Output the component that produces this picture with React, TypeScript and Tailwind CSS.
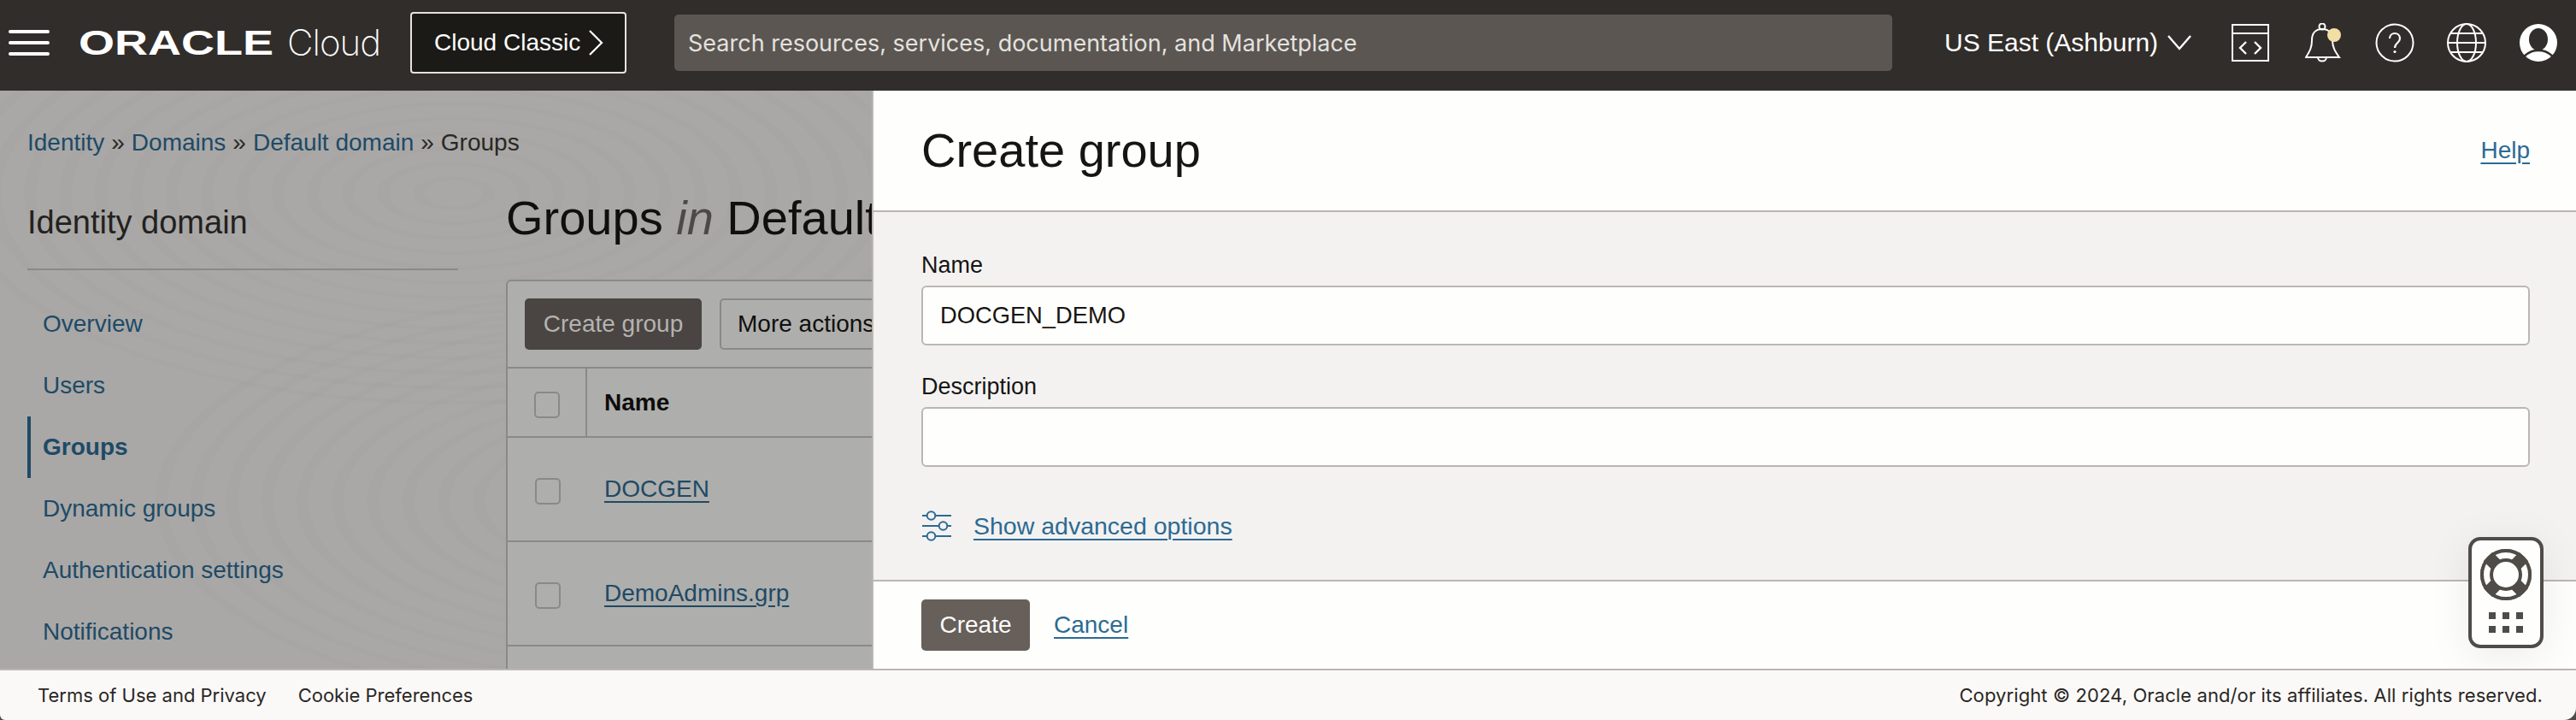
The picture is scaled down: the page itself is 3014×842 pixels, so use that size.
import React from "react";

const sans = "font-['Liberation_Sans',Arial,sans-serif]";
const inter = "font-['Inter','Liberation_Sans',sans-serif]";

function Hamburger() {
  return (
    <div className="flex flex-col gap-[9px] w-[48px] mr-[34px]">
      <div className="h-[4px] rounded-full bg-white" />
      <div className="h-[4px] rounded-full bg-white" />
      <div className="h-[4px] rounded-full bg-white" />
    </div>
  );
}

function Logo() {
  return (
    <svg width="232" height="50" viewBox="0 0 232 50" className="mr-[12px]">
      <text x="0" y="39" fill="#fff" fontFamily="Liberation Sans" fontWeight="700" fontSize="41" textLength="228" lengthAdjust="spacingAndGlyphs">ORACLE</text>
    </svg>
  );
}

function Chev() {
  return (
    <svg width="18" height="30" viewBox="0 0 18 30" fill="none" stroke="#fff" strokeWidth="2.2">
      <path d="M2 1 L16 15 L2 29" />
    </svg>
  );
}

function DevIcon() {
  return (
    <svg width="44" height="44" viewBox="0 0 44 44" fill="none" stroke="#fff" strokeWidth="2">
      <rect x="1" y="1" width="42" height="42" />
      <path d="M1 11 H43" />
      <path d="M17 21 L10 28 L17 35 M27 21 L34 28 L27 35" strokeWidth="2.4" />
    </svg>
  );
}

function BellIcon() {
  return (
    <svg width="44" height="46" viewBox="0 0 44 46" fill="none" stroke="#fff" strokeWidth="2">
      <circle cx="20" cy="4" r="3.5" />
      <path d="M1 40 C6 32 8 28 8 20 C8 11 13 7 20 7 C27 7 32 11 32 20 C32 28 35 33 40 40 Z" />
      <path d="M15 40 C15 46 25 46 25 40" />
      <circle cx="34" cy="14" r="8" fill="#f2dfa6" stroke="none" />
    </svg>
  );
}

function HelpIcon() {
  return (
    <svg width="46" height="46" viewBox="0 0 46 46" fill="none" stroke="#fff" strokeWidth="2">
      <circle cx="23" cy="23" r="21.5" />
      <path d="M17 18 C17 10 29 10 29 18 C29 23 23 23 23 29" strokeWidth="2.2" />
      <circle cx="23" cy="33.5" r="1.6" fill="#fff" stroke="none" />
    </svg>
  );
}

function GlobeIcon() {
  return (
    <svg width="46" height="46" viewBox="0 0 46 46" fill="none" stroke="#fff" strokeWidth="2">
      <circle cx="23" cy="23" r="22" />
      <ellipse cx="23" cy="23" rx="11" ry="22" />
      <path d="M1 23 H45 M5 12 H41 M5 34 H41" />
    </svg>
  );
}

function AvatarIcon() {
  return (
    <svg width="44" height="44" viewBox="0 0 44 44">
      <circle cx="22" cy="22" r="22" fill="#fff" />
      <ellipse cx="22" cy="18" rx="11" ry="13" fill="#312d2a" />
      <path d="M5 38 C12 32 16 31 22 31 C28 31 32 32 39 38" fill="none" stroke="#312d2a" strokeWidth="2.5" />
    </svg>
  );
}

function Header() {
  return (
    <header className="h-[106px] shrink-0 bg-[#312d2a] flex items-center pl-[10px] pb-[6px] text-white">
      <Hamburger />
      <Logo />
      <span className={`${inter} text-[42px] font-extralight leading-none tracking-[-1px] w-[144px]`}>Cloud</span>
      <div className="w-[253px] h-[72px] mr-[56px] bg-[#1b1a17] border-2 border-[#e6e3df] rounded-[4px] flex items-center pl-[26px] gap-[9px]">
        <span className={`${sans} text-[28px] leading-none`}>Cloud Classic</span>
        <Chev />
      </div>
      <div className="w-[1425px] h-[66px] mr-[61px] bg-[#5b5652] rounded-[5px] flex items-center pl-[16px]">
        <span className={`${inter} text-[27px] leading-none text-[#e4e2df]`}>Search resources, services, documentation, and Marketplace</span>
      </div>
      <span className={`${sans} text-[30px] leading-none mr-[11px]`}>US East (Ashburn)</span>
      <svg width="28" height="18" viewBox="0 0 28 18" fill="none" stroke="#fff" strokeWidth="2.4" className="mr-[47px]">
        <path d="M1 1 L14 16 L27 1" />
      </svg>
      <div className="flex items-center">
        <div className="mr-[42px]"><DevIcon /></div>
        <div className="mr-[38px]"><BellIcon /></div>
        <div className="mr-[38px]"><HelpIcon /></div>
        <div className="mr-[39px]"><GlobeIcon /></div>
        <AvatarIcon />
      </div>
    </header>
  );
}

function Texture() {
  const centers: [number, number][] = [[180, 120], [620, 60], [900, 280], [260, 480], [720, 560]];
  const radii = Array.from({ length: 14 }, (_, i) => 14 + i * 14);
  return (
    <svg className="absolute inset-0 w-full h-full" viewBox="0 0 1022 676" preserveAspectRatio="none" fill="none" stroke="#000" strokeOpacity="0.008" strokeWidth="5">
      {centers.map(([x, y], i) => (
        <g key={i}>
          {radii.map((r) => (
            <ellipse key={r} cx={x} cy={y} rx={r} ry={r * 1.25} />
          ))}
        </g>
      ))}
    </svg>
  );
}

const navItems = ["Overview", "Users", "Groups", "Dynamic groups", "Authentication settings", "Notifications"];

function Sidebar() {
  return (
    <aside className="w-[504px] shrink-0 pt-[13px]">
      <h2 className="text-[38px] leading-[48px] text-[#232120] pb-[30px] border-b-2 border-[#8a8987]">Identity domain</h2>
      <nav className="mt-[27px]">
        {navItems.map((n) =>
          n === "Groups" ? (
            <div key={n} className="h-[72px] flex items-center pl-[14px] border-l-4 border-[#1e4a66] text-[28px] font-bold text-[#1e4a66]">{n}</div>
          ) : (
            <div key={n} className="h-[72px] flex items-center pl-[14px] border-l-4 border-transparent text-[28px] text-[#1e4a66]">{n}</div>
          )
        )}
      </nav>
    </aside>
  );
}

function Check({ nudge }: { nudge?: boolean }) {
  return <div className={`w-[30px] h-[31px] rounded-[5px] border-2 border-[#8a8987] ${nudge ? "mt-[5px]" : ""}`} />;
}

function GroupRow({ name }: { name: string }) {
  return (
    <div className="h-[122px] flex border-b-2 border-[#8a8987]">
      <div className="w-[93px] flex items-center justify-center"><Check nudge /></div>
      <div className="flex items-center pl-[20px]">
        <span className="text-[28px] text-[#1e4a66] underline underline-offset-[5px]">{name}</span>
      </div>
    </div>
  );
}

function Main() {
  return (
    <main className="ml-[56px] w-[1300px] shrink-0">
      <h1 className="h-[64px] text-[56px] leading-[64px] text-[#100f0e] whitespace-nowrap">
        Groups <em className="text-[#4d4946]">in</em> Default domain Domain
      </h1>
      <section className="mt-[40px] bg-[#aeaeac] border-2 border-b-0 border-[#8a8987] rounded-t-[6px] h-[460px]">
        <div className="h-[102px] border-b-2 border-[#8a8987] flex gap-[21px] pt-[20px] pl-[20px]">
          <div className="w-[207px] h-[60px] bg-[#4a4542] rounded-[5px] flex items-center justify-center text-[28px] text-[#b4b3b1]">Create group</div>
          <div className="w-[240px] h-[60px] border-2 border-[#8a8987] rounded-[5px] flex items-center pl-[19px] text-[28px] text-[#100f0e]">More actions</div>
        </div>
        <div className="h-[81px] flex border-b-2 border-[#8a8987]">
          <div className="w-[93px] flex items-center justify-center border-r-2 border-[#8a8987]"><Check nudge /></div>
          <div className="flex items-center pl-[20px] text-[28px] font-bold text-[#0d0c0b]">Name</div>
        </div>
        <GroupRow name="DOCGEN" />
        <GroupRow name="DemoAdmins.grp" />
      </section>
    </main>
  );
}

function Background() {
  return (
    <div className={`${sans} absolute inset-0 bg-[#a9a8a6] overflow-hidden`}>
      <Texture />
      <div className="relative pl-[32px] pt-[41px]">
        <div className="h-[40px] flex items-center gap-[8px] text-[28px] whitespace-nowrap text-[#1e4a66]">
          <span>Identity</span><span className="text-[#2a2724]">»</span>
          <span>Domains</span><span className="text-[#2a2724]">»</span>
          <span>Default domain</span><span className="text-[#2a2724]">»</span>
          <span className="text-[#2a2724]">Groups</span>
        </div>
        <div className="flex mt-[36px]">
          <Sidebar />
          <Main />
        </div>
      </div>
    </div>
  );
}

function SlidersIcon() {
  return (
    <svg width="36" height="36" viewBox="0 0 36 36" fill="none" stroke="#2c6a93" strokeWidth="2">
      <path d="M1 6 H6 M17 6 H35 M1 18 H20 M31 18 H35 M1 30 H6 M17 30 H35" />
      <circle cx="11.5" cy="6" r="4.8" />
      <circle cx="25.5" cy="18" r="4.8" />
      <circle cx="11.5" cy="30" r="4.8" />
    </svg>
  );
}

function Panel() {
  const link = "text-[#2c6a93] underline underline-offset-[5px] decoration-2";
  return (
    <div className={`${sans} absolute top-0 bottom-0 right-0 w-[1994px] bg-[#f3f2f1] border-l-2 border-[#bcb6b1] flex flex-col`}>
      <div className="h-[142px] shrink-0 bg-[#fefefc] border-b-2 border-[#bcb6b1] flex items-center justify-between pl-[56px] pr-[54px]">
        <h2 className="text-[56px] leading-none text-[#161513]">Create group</h2>
        <a className={`text-[28px] ${link}`}>Help</a>
      </div>
      <div className="flex-1 pl-[56px] pr-[54px] pt-[42px]">
        <div className="text-[27px] leading-[40px] text-[#161513]">Name</div>
        <div className="mt-[4px] h-[70px] bg-[#fefefc] border-2 border-[#bcb6b1] rounded-[6px] flex items-center pl-[20px] text-[27.3px] text-[#161513]">DOCGEN_DEMO</div>
        <div className="mt-[28px] text-[27px] leading-[40px] text-[#161513]">Description</div>
        <div className="mt-[4px] h-[70px] bg-[#fefefc] border-2 border-[#bcb6b1] rounded-[6px]" />
        <div className="mt-[51px] flex items-center gap-[25px]">
          <SlidersIcon />
          <a className={`text-[28.5px] leading-[36px] ${link}`}>Show advanced options</a>
        </div>
      </div>
      <div className="h-[104px] shrink-0 bg-[#fefefc] border-t-2 border-[#bcb6b1] flex items-center pl-[56px] gap-[28px]">
        <div className="w-[127px] h-[60px] bg-[#665f5a] rounded-[5px] flex items-center justify-center text-[28px] text-[#fcfbfa]">Create</div>
        <a className={`text-[28px] ${link}`}>Cancel</a>
      </div>
    </div>
  );
}

function HelpWidget() {
  return (
    <div className="absolute left-[2888px] top-[522px] w-[88px] h-[130px] bg-[#fefefc] border-4 border-[#4f4c48] rounded-[14px] shadow-[0_8px_50px_rgba(0,0,0,0.08)] flex flex-col items-center pt-[10px]">
      <svg width="60" height="60" viewBox="0 0 60 60">
        <circle cx="30" cy="30" r="29" fill="#fefefc" stroke="#4f4c48" strokeWidth="2" />
        <path d="M9 9 L51 51 M51 9 L9 51" stroke="#4f4c48" strokeWidth="15" />
        <circle cx="30" cy="30" r="19" fill="#4f4c48" />
        <circle cx="30" cy="30" r="15" fill="#fefefc" />
        <circle cx="30" cy="30" r="28" fill="none" stroke="#4f4c48" strokeWidth="4" />
      </svg>
      <div className="mt-[14px] grid grid-cols-3 gap-x-[8px] gap-y-[8px]">
        {[0, 1, 2, 3, 4, 5].map((i) => (
          <div key={i} className="w-[8px] h-[8px] bg-[#4f4c48]" />
        ))}
      </div>
    </div>
  );
}

function Footer() {
  return (
    <footer className={`${inter} h-[60px] shrink-0 bg-[#fbf9f8] border-t-2 border-[#bcb6b1] rounded-bl-[6px] rounded-br-[14px] flex items-center justify-between pl-[44px] pr-[39px] text-[22px] text-[#2a2724]`}>
      <div className="flex gap-[37px]">
        <span>Terms of Use and Privacy</span>
        <span>Cookie Preferences</span>
      </div>
      <span className="tracking-[0.1px]">Copyright © 2024, Oracle and/or its affiliates. All rights reserved.</span>
    </footer>
  );
}

export default function App() {
  return (
    <div className="w-[3014px] h-[842px] flex flex-col overflow-hidden bg-[#4a4a46]">
      <Header />
      <div className="relative flex-1 overflow-hidden">
        <Background />
        <Panel />
        <HelpWidget />
      </div>
      <Footer />
    </div>
  );
}
